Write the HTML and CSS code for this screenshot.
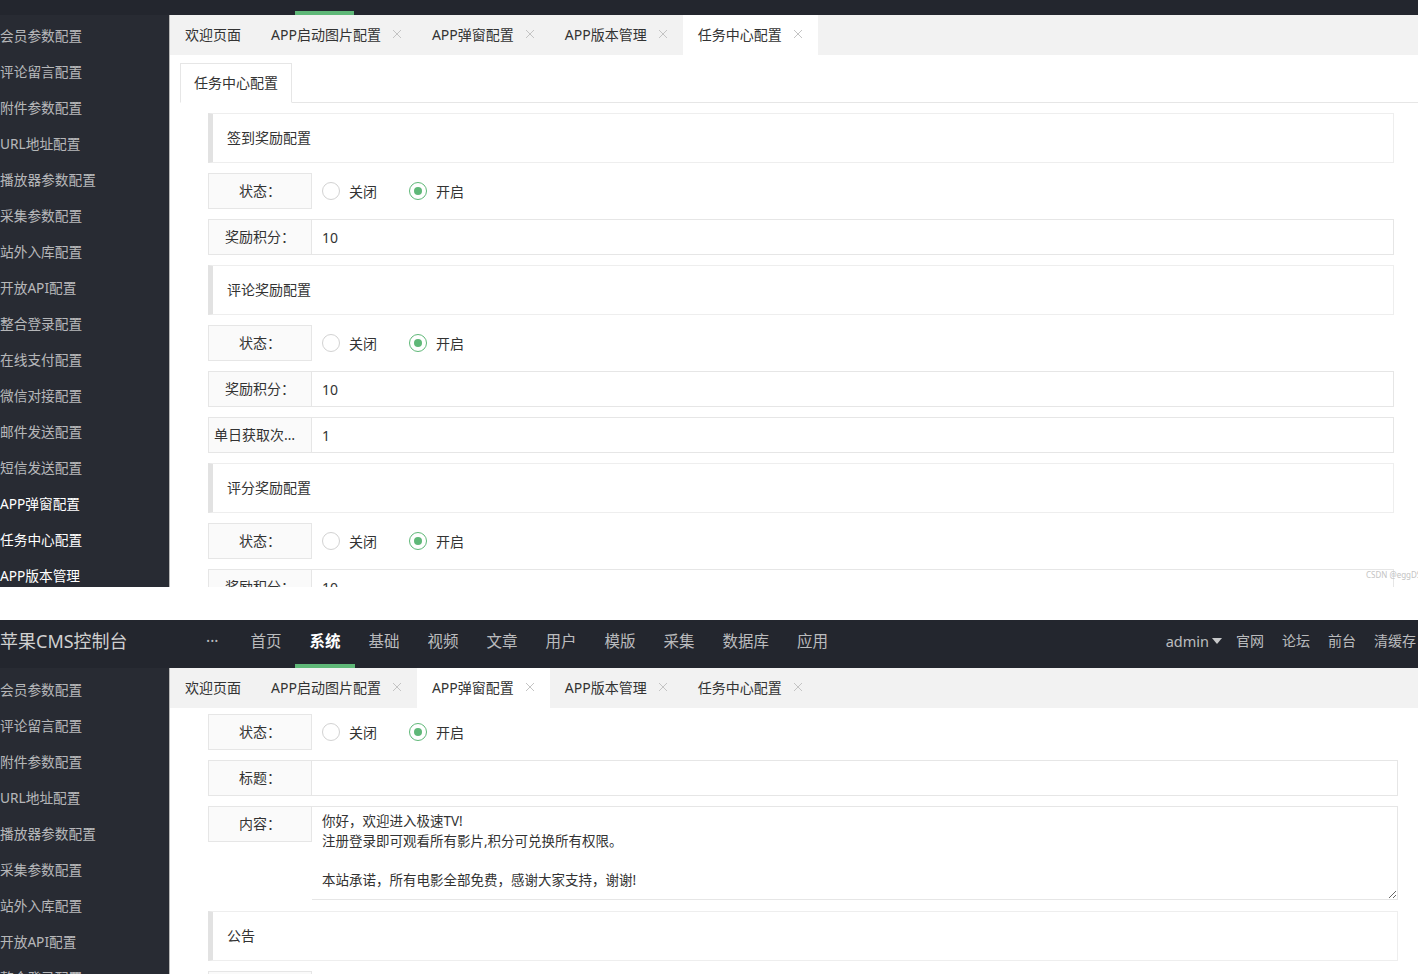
FILE: index.html
```html
<!DOCTYPE html>
<html lang="zh-CN">
<head>
    <meta charset="UTF-8">
    <meta name="viewport" content="width=device-width, initial-scale=1.0">
    <title>苹果CMS控制台</title>
    <link rel="stylesheet" href="styles.css">
</head>
<body>
    <!-- shot 1: 任务中心配置 (header scrolled out, only its lower edge shows) -->
    <div class="shot shot-task">
        <div class="topbar-edge"><span class="edge-on"></span></div>
        <div class="main">
            <aside class="side">
                <a>会员参数配置</a>
                <a>评论留言配置</a>
                <a>附件参数配置</a>
                <a>URL地址配置</a>
                <a>播放器参数配置</a>
                <a>采集参数配置</a>
                <a>站外入库配置</a>
                <a>开放API配置</a>
                <a>整合登录配置</a>
                <a>在线支付配置</a>
                <a>微信对接配置</a>
                <a>邮件发送配置</a>
                <a>短信发送配置</a>
                <a class="new">APP弹窗配置</a>
                <a class="new">任务中心配置</a>
                <a class="new">APP版本管理</a>
            </aside>
            <section class="body">
                <div class="tabs">
                    <span class="tab">欢迎页面</span>
                    <span class="tab">APP启动图片配置<svg class="x" viewBox="0 0 10 10"><path d="M1 1L9 9M9 1L1 9"/></svg></span>
                    <span class="tab">APP弹窗配置<svg class="x" viewBox="0 0 10 10"><path d="M1 1L9 9M9 1L1 9"/></svg></span>
                    <span class="tab">APP版本管理<svg class="x" viewBox="0 0 10 10"><path d="M1 1L9 9M9 1L1 9"/></svg></span>
                    <span class="tab on">任务中心配置<svg class="x" viewBox="0 0 10 10"><path d="M1 1L9 9M9 1L1 9"/></svg></span>
                </div>
                <div class="page page-task">
                    <div class="sub-tabs">
                        <span class="sub-tab">任务中心配置</span>
                    </div>
                    <form class="form form-task">
                        <div class="quote">签到奖励配置</div>
                        <div class="row">
                            <label class="label">状态：</label>
                            <div class="radios">
                                <span class="radio"><i></i>关闭</span>
                                <span class="radio on"><i></i>开启</span>
                            </div>
                        </div>
                        <div class="row">
                            <label class="label">奖励积分：</label>
                            <input class="input" type="text" value="10">
                        </div>

                        <div class="quote">评论奖励配置</div>
                        <div class="row">
                            <label class="label">状态：</label>
                            <div class="radios">
                                <span class="radio"><i></i>关闭</span>
                                <span class="radio on"><i></i>开启</span>
                            </div>
                        </div>
                        <div class="row">
                            <label class="label">奖励积分：</label>
                            <input class="input" type="text" value="10">
                        </div>
                        <div class="row">
                            <label class="label">单日获取次数：</label>
                            <input class="input" type="text" value="1">
                        </div>

                        <div class="quote">评分奖励配置</div>
                        <div class="row">
                            <label class="label">状态：</label>
                            <div class="radios">
                                <span class="radio"><i></i>关闭</span>
                                <span class="radio on"><i></i>开启</span>
                            </div>
                        </div>
                        <div class="row">
                            <label class="label">奖励积分：</label>
                            <input class="input" type="text" value="10">
                        </div>
                    </form>
                </div>
            </section>
        </div>
        <span class="mark">CSDN @eggDS</span>
    </div>

    <!-- shot 2: APP弹窗配置 -->
    <div class="shot shot-popup">
        <header class="topbar">
            <div class="logo">苹果CMS控制台</div>
            <nav class="menu">
                <a class="more">···</a>
                <a>首页</a>
                <a class="on">系统</a>
                <a>基础</a>
                <a>视频</a>
                <a>文章</a>
                <a>用户</a>
                <a>模版</a>
                <a>采集</a>
                <a>数据库</a>
                <a>应用</a>
            </nav>
            <nav class="user">
                <a class="admin">admin<i class="caret"></i></a>
                <a>官网</a>
                <a>论坛</a>
                <a>前台</a>
                <a>清缓存</a>
            </nav>
        </header>
        <div class="main">
            <aside class="side">
                <a>会员参数配置</a>
                <a>评论留言配置</a>
                <a>附件参数配置</a>
                <a>URL地址配置</a>
                <a>播放器参数配置</a>
                <a>采集参数配置</a>
                <a>站外入库配置</a>
                <a>开放API配置</a>
                <a>整合登录配置</a>
            </aside>
            <section class="body">
                <div class="tabs">
                    <span class="tab">欢迎页面</span>
                    <span class="tab">APP启动图片配置<svg class="x" viewBox="0 0 10 10"><path d="M1 1L9 9M9 1L1 9"/></svg></span>
                    <span class="tab on">APP弹窗配置<svg class="x" viewBox="0 0 10 10"><path d="M1 1L9 9M9 1L1 9"/></svg></span>
                    <span class="tab">APP版本管理<svg class="x" viewBox="0 0 10 10"><path d="M1 1L9 9M9 1L1 9"/></svg></span>
                    <span class="tab">任务中心配置<svg class="x" viewBox="0 0 10 10"><path d="M1 1L9 9M9 1L1 9"/></svg></span>
                </div>
                <form class="form form-popup">
                    <div class="row">
                        <label class="label">状态：</label>
                        <div class="radios">
                            <span class="radio"><i></i>关闭</span>
                            <span class="radio on"><i></i>开启</span>
                        </div>
                    </div>
                    <div class="row">
                        <label class="label">标题：</label>
                        <input class="input" type="text" value="">
                    </div>
                    <div class="row row-area">
                        <label class="label">内容：</label>
                        <textarea class="area">你好，欢迎进入极速TV!
注册登录即可观看所有影片,积分可兑换所有权限。

本站承诺，所有电影全部免费，感谢大家支持，谢谢!</textarea>
                    </div>
                    <div class="quote">公告</div>
                    <div class="row">
                        <span class="label"></span>
                    </div>
                </form>
            </section>
        </div>
    </div>
</body>
</html>
```

FILE: styles.css
```css
* {
    box-sizing: border-box;
}

body {
    margin: 0;
    background: #fff;
    font-family: "Noto Sans", "Noto Sans CJK SC", sans-serif;
    font-size: 14px;
    color: #333;
}

a {
    color: inherit;
    text-decoration: none;
}

/* the two screenshots */
.shot {
    position: relative;
    overflow: hidden;
}

.shot-task {
    height: 587px;
    margin-bottom: 33px;
}

.shot-popup {
    height: 354px;
}

/* lower edge of the header in the first shot */
.topbar-edge {
    display: flex;
    align-items: flex-end;
    height: 15px;
    background: #23262e;
}

.edge-on {
    width: 59px;
    height: 4px;
    margin-left: 295px;
    background: #5fb878;
}

/* header */
.topbar {
    display: flex;
    height: 48px;
    background: #23262e;
    color: rgba(255, 255, 255, 0.7);
}

.logo {
    width: 170px;
    flex: none;
    font-size: 18px;
    line-height: 42px;
    color: #d0d0d0;
    white-space: nowrap;
}

.menu {
    display: flex;
    margin-left: 22px;
    font-size: 15.5px;
}

.menu a {
    position: relative;
    height: 48px;
    padding: 0 14px;
    line-height: 42px;
    white-space: nowrap;
}

.menu .more {
    padding-right: 18px;
}

.menu .on {
    color: #fff;
    font-weight: bold;
}

.menu .on::after {
    content: "";
    position: absolute;
    left: 0;
    right: 0;
    bottom: 0;
    height: 4px;
    background: #5fb878;
}

.user {
    display: flex;
    gap: 18px;
    margin-left: auto;
    padding-right: 2px;
    line-height: 42px;
    white-space: nowrap;
}

.user .admin {
    display: flex;
    align-items: center;
    height: 42px;
    margin-right: -4px;
    font-size: 14.5px;
}

.caret {
    width: 0;
    height: 0;
    margin-left: 3px;
    border-top: 6px solid rgba(255, 255, 255, 0.75);
    border-left: 5px solid transparent;
    border-right: 5px solid transparent;
}

/* sidebar + body */
.main {
    display: flex;
    min-height: 1000px;
}

.side {
    width: 170px;
    flex: none;
    padding-top: 3px;
    background: #282b33;
    border-right: 1px solid #b8b8b8;
    overflow: hidden;
}

.side a {
    display: block;
    height: 36px;
    line-height: 36px;
    font-size: 13.7px;
    color: rgba(255, 255, 255, 0.68);
    white-space: nowrap;
}

.shot-popup .side a {
    line-height: 37px;
}

.side a.new {
    color: #fff;
}

.body {
    flex: 1;
    min-width: 0;
}

/* page tabs */
.tabs {
    display: flex;
    height: 40px;
    background: #f2f2f2;
}

.tab {
    display: flex;
    align-items: center;
    padding: 0 15px 2px;
    white-space: nowrap;
}

.tab.on {
    background: #fff;
}

.tab .x {
    width: 10px;
    height: 10px;
    margin-left: 11px;
    fill: none;
    stroke: #c4c4c4;
    stroke-width: 1;
}

/* task page */
.page-task {
    padding: 8px 0 0 10px;
}

.sub-tabs {
    display: flex;
    height: 40px;
    border-bottom: 1px solid #e6e6e6;
}

.sub-tab {
    height: 40px;
    padding: 0 13px;
    line-height: 38px;
    background: #fff;
    border: 1px solid #e6e6e6;
    border-bottom-color: #fff;
}

.form-task {
    padding: 10px 24px 0 28px;
}

.form-popup {
    padding: 6px 20px 0 38px;
}

/* form pieces */
.quote {
    height: 50px;
    margin-bottom: 10px;
    padding-left: 14px;
    line-height: 48px;
    border: 1px solid #eee;
    border-left: 5px solid #e2e2e2;
}

.row {
    display: flex;
    height: 36px;
    margin-bottom: 10px;
}

.label {
    width: 104px;
    flex: none;
    height: 36px;
    padding: 0 5px;
    line-height: 34px;
    text-align: center;
    background: #fafafa;
    border: 1px solid #e6e6e6;
    white-space: nowrap;
    overflow: hidden;
    text-overflow: ellipsis;
}

.input {
    flex: 1;
    min-width: 0;
    height: 36px;
    padding: 0 10px;
    font: inherit;
    color: #333;
    background: #fff;
    border: 1px solid #e6e6e6;
    border-left: 0;
    outline: none;
}

.radios {
    display: flex;
    align-items: center;
    padding-left: 10px;
}

.radio {
    display: flex;
    align-items: center;
    margin-right: 32px;
}

.radio i {
    position: relative;
    width: 18px;
    height: 18px;
    margin-right: 9px;
    border: 1px solid #d2d2d2;
    border-radius: 50%;
}

.radio.on i {
    border-color: #5fb878;
}

.radio.on i::after {
    content: "";
    position: absolute;
    top: 4px;
    left: 4px;
    right: 4px;
    bottom: 4px;
    border-radius: 50%;
    background: #5fb878;
}

.row-area {
    height: auto;
    align-items: flex-start;
    margin-bottom: 11px;
}

.area {
    flex: 1;
    height: 94px;
    padding: 5px 10px;
    font-family: inherit;
    font-size: 13.5px;
    line-height: 19.5px;
    color: #333;
    border: 1px solid #e6e6e6;
    border-left: 0;
    resize: vertical;
    outline: none;
}

.mark {
    position: absolute;
    left: 1366px;
    top: 569px;
    font-size: 8px;
    color: #c4c4c4;
    white-space: nowrap;
}
```
